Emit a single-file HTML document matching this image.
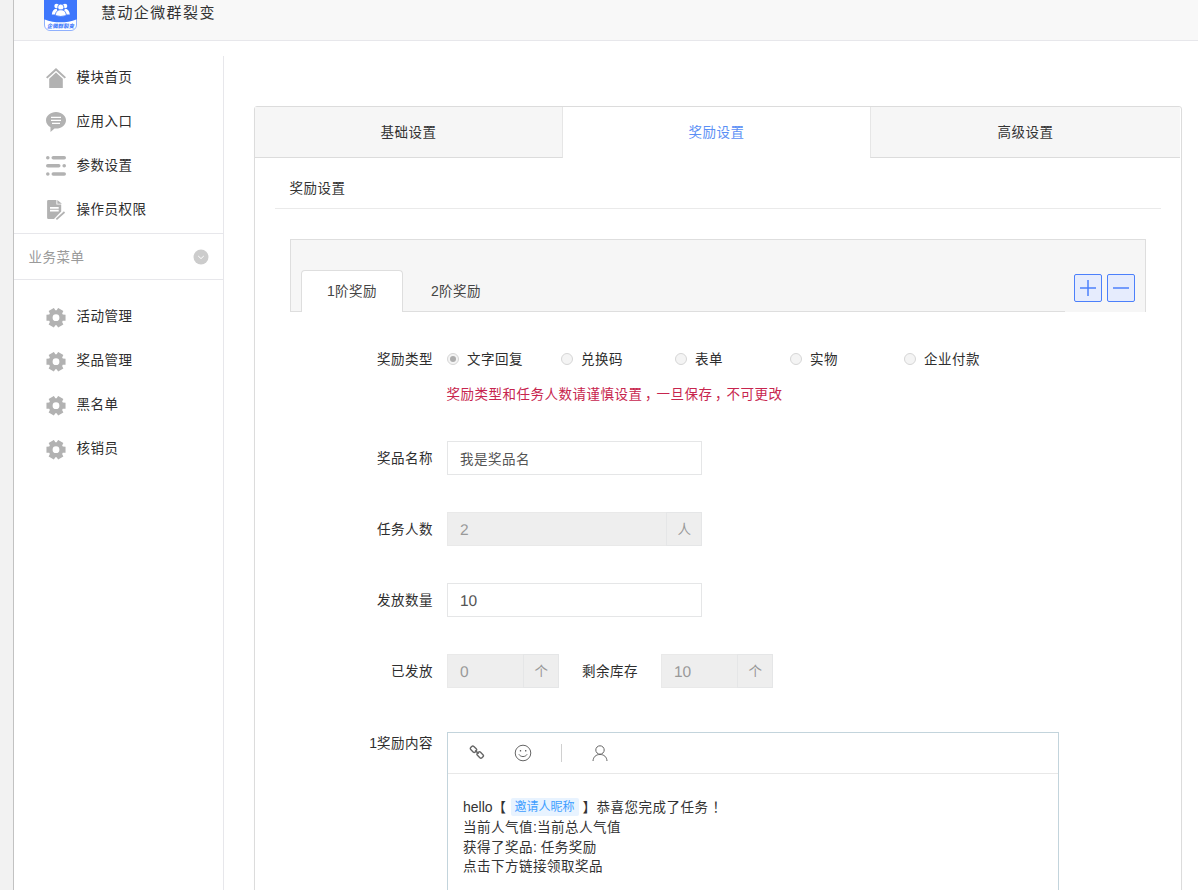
<!DOCTYPE html>
<html lang="zh-CN">
<head>
<meta charset="utf-8">
<title>慧动企微群裂变</title>
<style>
*{box-sizing:border-box;margin:0;padding:0}
html,body{width:1198px;height:890px;overflow:hidden}
body{background:#f2f2f2;font-family:"Liberation Sans","Noto Sans CJK SC",sans-serif;font-size:13.5px;letter-spacing:.5px;color:#333;position:relative}
.abs{position:absolute}
#wrap{position:absolute;left:13px;top:0;width:1185px;height:890px;background:#fff;border-left:1px solid #c2c2c2}
#head{position:absolute;left:14px;top:0;width:1184px;height:41px;background:#f8f8f8;border-bottom:1px solid #e7e7eb}
#title{position:absolute;left:101px;top:1px;height:24px;line-height:24px;font-size:15px;letter-spacing:1.4px;color:#333}
#logo{position:absolute;left:44px;top:-3px;width:33px;height:34px}
/* sidebar */
#side{position:absolute;left:14px;top:56px;width:210px;height:834px;border-right:1px solid #e7e7eb}
.mi{position:absolute;left:76.5px;height:20px;line-height:20px;font-size:13.5px;color:#2e2e2e;white-space:nowrap}
.ic{position:absolute;left:46px;width:20px;height:20px}
.hr{position:absolute;left:14px;width:209px;height:1px;background:#e7e7eb}
#bm{position:absolute;left:28.500px;top:248px;height:20px;line-height:20px;color:#9a9a9a;font-size:13.5px}
/* panel */
#panel{position:absolute;left:254px;top:106px;width:928px;height:800px;border:1px solid #dcdcdc;border-radius:3px;background:#fff;box-shadow:0 1px 1px rgba(0,0,0,.05)}
.tab{position:absolute;top:107px;height:51px;line-height:52px;text-align:center;font-size:13.5px;color:#333;background:#f6f6f6;border-bottom:1px solid #dcdcdc}
.tab.on{background:#fff;border-bottom:0;color:#5b8ff5}
#sect{position:absolute;left:275px;top:168px;width:886px;height:41px;border-bottom:1px solid #eaeaea;padding-left:14.5px;line-height:42px;font-size:13.5px;color:#333}
#gbox{position:absolute;left:290px;top:239px;width:856px;height:73px;background:#f6f6f6;border:1px solid #dedede;border-bottom:0}
#gline{position:absolute;left:290px;top:311px;width:775px;height:1px;background:#dedede}
#t1{position:absolute;left:301px;top:270px;width:102px;height:42px;background:#fff;border:1px solid #dedede;border-bottom:0;border-radius:4px 4px 0 0;text-align:center;line-height:40px;color:#444}
#t2{position:absolute;left:405px;top:271px;width:102px;height:40px;text-align:center;line-height:41px;color:#444}
.btn{position:absolute;top:274px;width:28px;height:28px;border:1px solid #4c80fb;border-radius:2px;background:#e6ecfd}
/* form */
.lb{position:absolute;left:300px;width:133px;text-align:right;height:20px;line-height:20px;font-size:13.5px;color:#2e2e2e;white-space:nowrap}
.rd{position:absolute;top:353px;width:12px;height:12px;border-radius:50%;border:1px solid #d6d6d6;background:#f4f4f4}
.rd.on:after{content:"";position:absolute;left:2px;top:2px;width:6px;height:6px;border-radius:50%;background:#adadad}
.rt{position:absolute;top:350px;height:20px;line-height:20px;font-size:13.5px;color:#2e2e2e;white-space:nowrap}
.inp{position:absolute;height:34px;border:1px solid #e5e6e7;background:#fff;line-height:36px;padding-left:12px;font-size:13.5px;color:#555;overflow:hidden;white-space:nowrap}
.inp.dis{background:#eee;color:#999;border-color:#e9e9e9}
.add{position:absolute;height:34px;border:1px solid #e5e6e7;border-left:1px solid #e5e6e7;background:#eee;line-height:34px;text-align:center;font-size:13.5px;color:#999;padding-left:1px}
#ed{position:absolute;left:447px;top:732px;width:612px;height:200px;border:1px solid #c3d4dc;background:#fff}
#edbar{position:absolute;left:448px;top:773px;width:610px;height:1px;background:#e8e8e8}
.ln{position:absolute;left:463px;height:20px;line-height:20px;font-size:13.5px;color:#333;white-space:nowrap}
#tag{display:inline-block;height:18px;line-height:18px;padding:0 4px 0 4px;margin:0 4px 0 4px;background:#e8f3ff;color:#409eff;font-size:12px;letter-spacing:0;border-radius:2px;vertical-align:1px}
.en{font-size:14px;letter-spacing:0}
.pc{position:relative;left:2.5px}
.num{font-size:15.5px;letter-spacing:0;text-rendering:geometricPrecision}
</style>
</head>
<body>
<div id="wrap"></div>
<div id="head"></div>
<svg id="logo" viewBox="0 0 33 34">
  <rect x="0.5" y="0.5" width="32" height="33" rx="5.500" fill="#fff" stroke="#8fb0fd" stroke-width="1"/>
  <path d="M0 0H33V22.200C27 24.600 22 25.300 16.500 25.300S6 24.600 0 22.200Z" fill="#3e77fc"/>
  <g fill="#fff">
    <circle cx="12.600" cy="9" r="2.300"/><path d="M7.800 17.400c.3-3.600 2.300-5.600 4.900-5.600l2.300 5.600z"/>
    <circle cx="21" cy="9" r="2.300"/><path d="M25.800 17.400c-.3-3.600-2.300-5.600-4.900-5.600l-2.300 5.600z"/>
    <circle cx="16.800" cy="10.200" r="3.100" stroke="#3e77fc" stroke-width=".8"/>
    <path d="M11.300 18.600c.2-4.200 2.500-5.800 5.500-5.800s5.300 1.600 5.500 5.800q-5.500 1.700-11 0z" stroke="#3e77fc" stroke-width=".8"/>
  </g>
  <text x="22.100" y="31.300" transform="skewX(-10)" font-size="5.400" font-weight="900" letter-spacing="0" fill="#4a80fc" text-anchor="middle" font-family="Liberation Sans,Noto Sans CJK SC,sans-serif">企微群裂变</text>
</svg>
<div id="title">慧动企微群裂变</div>

<div id="side"></div>
<!-- menu icons -->
<svg class="ic" style="top:68px" viewBox="0 0 20 20"><path d="M10 0L0 9.200 1.400 10.600 10 2.800 18.600 10.600 20 9.200Z" fill="#b2b2b2"/><path d="M10 4.600L3.200 10.800V20H16.800V10.800Z" fill="#b2b2b2"/></svg>
<div class="mi" style="top:68px">模块首页</div>
<svg class="ic" style="top:112px" viewBox="0 0 20 20"><path d="M10 0C4.500 0 0 3.700 0 8.300c0 3 1.800 5.500 4.500 7V20l4-3.500c.5.100 1 .1 1.500.1 5.500 0 10-3.700 10-8.300S15.500 0 10 0z" fill="#b2b2b2"/><path d="M5 5.300h10M5 8.300h10M6 11.300h8" stroke="#fff" stroke-width="1.200" fill="none"/></svg>
<div class="mi" style="top:112px">应用入口</div>
<svg class="ic" style="top:156px" viewBox="0 0 20 20" fill="#b2b2b2"><circle cx="1.800" cy="1.800" r="1.800"/><rect x="5.500" y="0" width="14.500" height="3.600" rx="1.800"/><rect x="0" y="8" width="14.500" height="3.600" rx="1.800"/><circle cx="18.200" cy="9.800" r="1.800"/><circle cx="1.800" cy="18" r="1.800"/><rect x="5.500" y="16.200" width="14.500" height="3.600" rx="1.800"/></svg>
<div class="mi" style="top:156px">参数设置</div>
<svg class="ic" style="top:199px;overflow:visible" viewBox="0 0 20 20"><path d="M2.400 0.900H10.400V5.600H15.200V12.400L8 19.950H2.400Q1.100 19.950 1.100 18.700V2.150Q1.100 0.900 2.400 0.900Z" fill="#b2b2b2"/><path d="M11.300 0.900L15.900 4.800H11.300Z" fill="#b2b2b2"/><path d="M4 8.850h8.700M4 11.650h8.700" stroke="#fff" stroke-width="1.600"/><path d="M10.400 20.400L18.500 13" stroke="#b2b2b2" stroke-width="1.700"/></svg>
<div class="mi" style="top:200px">操作员权限</div>

<div class="hr" style="top:233px"></div>
<div id="bm">业务菜单</div>
<svg class="abs" style="left:193px;top:249px;width:16px;height:16px" viewBox="0 0 16 16"><circle cx="8" cy="8" r="7.500" fill="#ccc"/><path d="M5.200 7l2.800 2.600L10.800 7" stroke="#fff" stroke-width="1" fill="none"/></svg>
<div class="hr" style="top:279px"></div>

<svg class="ic" style="top:308px" viewBox="0 0 20 20" fill="#b2b2b2"><path fill-rule="evenodd" d="M16.80 6.53 L19.54 6.69 L19.54 12.71 L16.80 12.87 L16.14 14.00 L17.37 16.46 L12.16 19.46 L10.65 17.17 L9.35 17.17 L7.84 19.46 L2.63 16.46 L3.86 14.00 L3.20 12.87 L0.46 12.71 L0.46 6.69 L3.20 6.53 L3.86 5.40 L2.63 2.94 L7.84 -0.06 L9.35 2.23 L10.65 2.23 L12.16 -0.06 L17.37 2.94 L16.14 5.40ZM10 6.3a3.4 3.4 0 1 0 0 6.8 3.4 3.4 0 0 0 0-6.800z"/></svg>
<div class="mi" style="top:307px">活动管理</div>
<svg class="ic" style="top:352px" viewBox="0 0 20 20" fill="#b2b2b2"><path fill-rule="evenodd" d="M16.80 6.53 L19.54 6.69 L19.54 12.71 L16.80 12.87 L16.14 14.00 L17.37 16.46 L12.16 19.46 L10.65 17.17 L9.35 17.17 L7.84 19.46 L2.63 16.46 L3.86 14.00 L3.20 12.87 L0.46 12.71 L0.46 6.69 L3.20 6.53 L3.86 5.40 L2.63 2.94 L7.84 -0.06 L9.35 2.23 L10.65 2.23 L12.16 -0.06 L17.37 2.94 L16.14 5.40ZM10 6.3a3.4 3.4 0 1 0 0 6.8 3.4 3.4 0 0 0 0-6.800z"/></svg>
<div class="mi" style="top:351px">奖品管理</div>
<svg class="ic" style="top:396px" viewBox="0 0 20 20" fill="#b2b2b2"><path fill-rule="evenodd" d="M16.80 6.53 L19.54 6.69 L19.54 12.71 L16.80 12.87 L16.14 14.00 L17.37 16.46 L12.16 19.46 L10.65 17.17 L9.35 17.17 L7.84 19.46 L2.63 16.46 L3.86 14.00 L3.20 12.87 L0.46 12.71 L0.46 6.69 L3.20 6.53 L3.86 5.40 L2.63 2.94 L7.84 -0.06 L9.35 2.23 L10.65 2.23 L12.16 -0.06 L17.37 2.94 L16.14 5.40ZM10 6.3a3.4 3.4 0 1 0 0 6.8 3.4 3.4 0 0 0 0-6.800z"/></svg>
<div class="mi" style="top:395px">黑名单</div>
<svg class="ic" style="top:440px" viewBox="0 0 20 20" fill="#b2b2b2"><path fill-rule="evenodd" d="M16.80 6.53 L19.54 6.69 L19.54 12.71 L16.80 12.87 L16.14 14.00 L17.37 16.46 L12.16 19.46 L10.65 17.17 L9.35 17.17 L7.84 19.46 L2.63 16.46 L3.86 14.00 L3.20 12.87 L0.46 12.71 L0.46 6.69 L3.20 6.53 L3.86 5.40 L2.63 2.94 L7.84 -0.06 L9.35 2.23 L10.65 2.23 L12.16 -0.06 L17.37 2.94 L16.14 5.40ZM10 6.3a3.4 3.4 0 1 0 0 6.8 3.4 3.4 0 0 0 0-6.800z"/></svg>
<div class="mi" style="top:439px">核销员</div>

<!-- panel -->
<div id="panel"></div>
<div class="tab" style="left:255px;width:308px;border-right:1px solid #e6e6e6">基础设置</div>
<div class="tab on" style="left:563px;width:307px">奖励设置</div>
<div class="tab" style="left:870px;width:310px;border-left:1px solid #e6e6e6">高级设置</div>
<div id="sect">奖励设置</div>
<div id="gbox"></div>
<div id="gline"></div>
<div id="t1"><span class="en">1</span>阶奖励</div>
<div id="t2"><span class="en">2</span>阶奖励</div>
<div class="btn" style="left:1074px"><svg width="26" height="26" viewBox="0 0 26 26" style="display:block"><path d="M5 13h16M13 5v16" stroke="#4c80fb" stroke-width="1.500"/></svg></div>
<div class="btn" style="left:1107px"><svg width="26" height="26" viewBox="0 0 26 26" style="display:block"><path d="M5 13h16" stroke="#4c80fb" stroke-width="1.500"/></svg></div>

<!-- form -->
<div class="lb" style="top:350px">奖励类型</div>
<div class="rd on" style="left:447px"></div><div class="rt" style="left:467px">文字回复</div>
<div class="rd" style="left:561px"></div><div class="rt" style="left:581px">兑换码</div>
<div class="rd" style="left:675px"></div><div class="rt" style="left:695px">表单</div>
<div class="rd" style="left:790px"></div><div class="rt" style="left:810px">实物</div>
<div class="rd" style="left:904px"></div><div class="rt" style="left:924px">企业付款</div>
<div class="abs" style="left:446.5px;top:385px;height:20px;line-height:20px;font-size:13.5px;color:#c7254e;white-space:nowrap">奖励类型和任务人数请谨慎设置<span class="pc">，</span>一旦保存<span class="pc">，</span>不可更改</div>

<div class="lb" style="top:449px">奖品名称</div>
<div class="inp" style="left:447px;top:441px;width:255px">我是奖品名</div>

<div class="lb" style="top:520px">任务人数</div>
<div class="inp dis" style="left:447px;top:512px;width:220px"><span class="num">2</span></div>
<div class="add" style="left:666px;top:512px;width:36px">人</div>

<div class="lb" style="top:591px">发放数量</div>
<div class="inp" style="left:447px;top:583px;width:255px"><span class="num">10</span></div>

<div class="lb" style="top:662px">已发放</div>
<div class="inp dis" style="left:447px;top:654px;width:77px"><span class="num">0</span></div>
<div class="add" style="left:523px;top:654px;width:36px">个</div>
<div class="abs" style="left:582px;top:662px;height:20px;line-height:20px;font-size:13.5px;color:#2e2e2e;white-space:nowrap">剩余库存</div>
<div class="inp dis" style="left:661px;top:654px;width:77px"><span class="num">10</span></div>
<div class="add" style="left:737px;top:654px;width:36px">个</div>

<div class="lb" style="top:733px"><span class="en">1</span>奖励内容</div>
<div id="ed"></div>
<div id="edbar"></div>
<svg class="abs" style="left:469px;top:744px;width:16px;height:16px" viewBox="0 0 16 16" fill="none" stroke="#666" stroke-width="1.400"><rect x="1.300" y="3" width="6.400" height="4.400" rx="1.500" transform="rotate(45 4.500 5.200)"/><rect x="8" y="8.800" width="6.400" height="4.400" rx="1.500" transform="rotate(45 11.200 11)"/><path d="M6.200 6.400l3.400 3.400" stroke-width="1.600"/></svg>
<svg class="abs" style="left:514px;top:744px;width:18px;height:18px" viewBox="0 0 18 18" fill="none" stroke="#666" stroke-width="1"><circle cx="9" cy="9" r="7.800"/><path d="M4.900 10.300c1.700 3 6.500 3 8.200 0"/><path d="M6.500 5.900v1.700M11.700 5.900v1.700" stroke-width="1.300"/></svg>
<div class="abs" style="left:561px;top:744px;width:1px;height:18px;background:#d0d0d0"></div>
<svg class="abs" style="left:591px;top:744px;width:18px;height:18px" viewBox="0 0 18 18" fill="none" stroke="#666" stroke-width="1"><circle cx="9" cy="6" r="4.200"/><path d="M2 17c.3-4.200 3-6.500 7-6.500s6.700 2.300 7 6.500"/></svg>

<div class="ln" style="top:797px"><span class="en">hello</span>【<span id="tag">邀请人昵称</span>】恭喜您完成了任务<span class="pc" style="left:4px">！</span></div>
<div class="ln" style="top:817px">当前人气值<span class="en">:</span>当前总人气值</div>
<div class="ln" style="top:837px">获得了奖品<span class="en">: </span>任务奖励</div>
<div class="ln" style="top:857px">点击下方链接领取奖品</div>
</body>
</html>
